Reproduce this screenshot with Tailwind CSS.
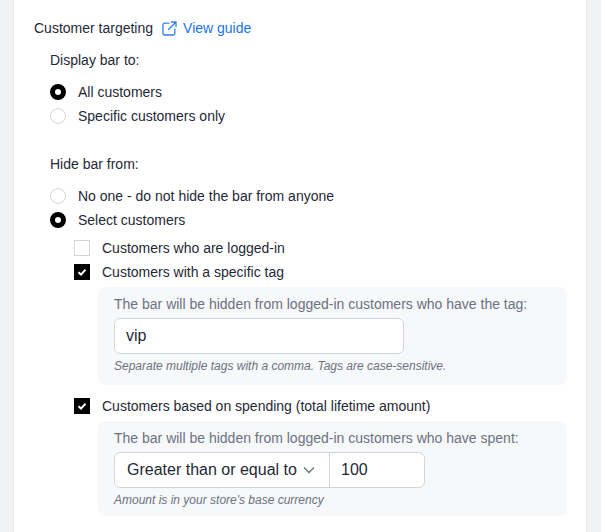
<!DOCTYPE html>
<html lang="en">
<head>
    <meta charset="UTF-8">
    <title>Customer targeting</title>
    <script src="https://cdn.jsdelivr.net/npm/@tailwindcss/browser@4"></script>
</head>
<body class="bg-[#f1f2f4] h-[532px] overflow-hidden font-['Liberation_Sans',Arial,sans-serif] text-[14px] leading-6 text-[#1f2937]">
    <div class="ml-[14px] w-[572px] h-[532px] bg-white pt-4 pl-5 shadow-[0_0_0_1px_#e9eaec]">
        <div class="flex items-center h-6">
            <span>Customer targeting</span>
            <a href="#" class="flex items-center ml-[9px] text-[#1a73e8]">
                <svg class="w-[15px] h-[15px] mr-[6px]" viewBox="0 0 15 15" fill="none" stroke="#2f80ed" stroke-width="1.3" stroke-linecap="round" stroke-linejoin="round">
                    <path d="M7 2.2H2.5A1.5 1.5 0 0 0 1 3.7v8.8A1.5 1.5 0 0 0 2.5 14h8.8a1.5 1.5 0 0 0 1.5-1.5V8"/>
                    <path d="M9.5 1H14v4.5M14 1 6.5 8.5"/>
                </svg>
                View guide
            </a>
        </div>

        <div class="ml-4 mt-2">
            <p class="h-6">Display bar to:</p>
            <div class="mt-2">
                <label class="flex items-center h-6">
                    <span class="w-4 h-4 rounded-full border-[5px] border-black bg-white mr-3"></span>All customers
                </label>
                <label class="flex items-center h-6">
                    <span class="w-4 h-4 rounded-full border border-[#d1d5db] bg-white mr-3"></span>Specific customers only
                </label>
            </div>

            <p class="h-6 mt-6">Hide bar from:</p>
            <div class="mt-2">
                <label class="flex items-center h-6">
                    <span class="w-4 h-4 rounded-full border border-[#d1d5db] bg-white mr-3"></span>No one - do not hide the bar from anyone
                </label>
                <label class="flex items-center h-6">
                    <span class="w-4 h-4 rounded-full border-[5px] border-black bg-white mr-3"></span>Select customers
                </label>
            </div>

            <div class="ml-6 mt-1">
                <label class="flex items-center h-6">
                    <span class="w-4 h-4 border border-[#d1d5db] bg-white mr-3"></span>Customers who are logged-in
                </label>
                <label class="flex items-center h-6">
                    <span class="w-4 h-4 bg-black flex items-center justify-center mr-3">
                        <svg class="w-3 h-3" viewBox="0 0 12 12" fill="none" stroke="white" stroke-width="2"><path d="M2.5 6.3 5 8.6 9.5 3.6"/></svg>
                    </span>Customers with a specific tag
                </label>

                <div class="ml-6 mt-[3px] w-[469px] h-[98px] rounded-lg bg-[#f7f8fa] px-4 pt-[5px]">
                    <p class="h-6 text-[#6b7280]">The bar will be hidden from logged-in customers who have the tag:</p>
                    <input type="text" value="vip" class="block mt-[2px] w-[290px] h-9 rounded-md border border-[#d1d5db] bg-white px-[11px] text-[16px] outline-none">
                    <p class="h-6 text-[12px] italic text-[#6b7280]">Separate multiple tags with a comma. Tags are case-sensitive.</p>
                </div>

                <label class="flex items-center h-6 mt-[9px]">
                    <span class="w-4 h-4 bg-black flex items-center justify-center mr-3">
                        <svg class="w-3 h-3" viewBox="0 0 12 12" fill="none" stroke="white" stroke-width="2"><path d="M2.5 6.3 5 8.6 9.5 3.6"/></svg>
                    </span>Customers based on spending (total lifetime amount)
                </label>

                <div class="ml-6 mt-[3px] w-[469px] h-[95px] rounded-lg bg-[#f7f8fa] px-4 pt-[5px]">
                    <p class="h-6 text-[#6b7280]">The bar will be hidden from logged-in customers who have spent:</p>
                    <div class="flex mt-[2px] w-[311px] h-9 rounded-md border border-[#d1d5db] bg-white text-[16px]">
                        <div class="flex items-center w-[215px] pl-3 border-r border-[#d1d5db]">
                            <span>Greater than or equal to</span>
                            <svg class="w-[14px] h-[14px] ml-[5px]" viewBox="0 0 14 14" fill="none" stroke="#6b7280" stroke-width="1.4"><path d="M2 4.5 7 9.5 12 4.5"/></svg>
                        </div>
                        <div class="flex items-center pl-[11px]">100</div>
                    </div>
                    <p class="h-6 text-[12px] italic text-[#6b7280]">Amount is in your store's base currency</p>
                </div>
            </div>
        </div>
    </div>
</body>
</html>
